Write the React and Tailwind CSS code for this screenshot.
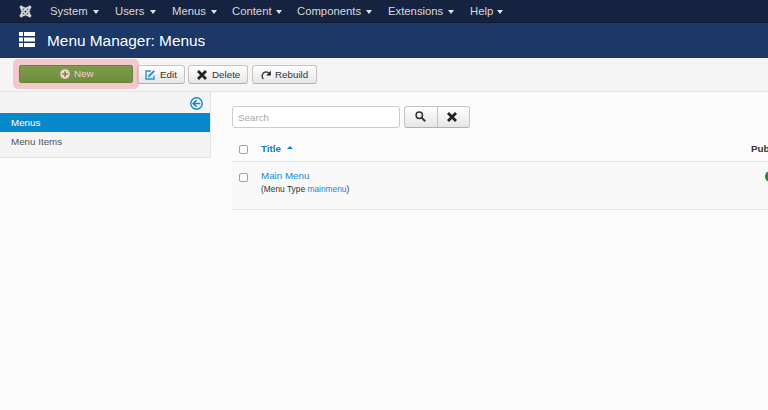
import React from 'react';
import { FaJoomla } from 'react-icons/fa';

const NAV = [
  ['System', 'w-[65px]', 'w-[39px]'],
  ['Users', 'w-[57px]', 'w-[31px]'],
  ['Menus', 'w-[60px]', 'w-[35px]'],
  ['Content', 'w-[65px]', 'w-[40px]'],
  ['Components', 'w-[91px]', 'w-[65px]'],
  ['Extensions', 'w-[82px]', 'w-[56px]'],
  ['Help', 'w-[40px]', 'w-[23px]'],
];

function CrossIcon() {
  return (
    <svg className="h-[10px] w-[10px] shrink-0" viewBox="0 0 10 10" fill="none" stroke="#222" strokeWidth="2.8">
      <path d="M1 1l8 8M9 1L1 9" />
    </svg>
  );
}

function Button({ className, children }) {
  return (
    <button className={`flex h-[19px] shrink-0 items-center rounded-[3px] border border-[#c4c4c4] border-b-[#b0b0b0] bg-linear-to-b from-white to-[#e6e6e6] text-[9.8px] text-[#333] ${className}`}>
      {children}
    </button>
  );
}

function Checkbox() {
  return <span className="block h-[9px] w-[9px] rounded-[2px] border border-[#a0a0a0] bg-white" />;
}

export default function App() {
  return (
    <div className="flex h-[410px] w-[768px] flex-col overflow-hidden bg-[#fcfcfc] font-['Liberation_Sans',Arial,sans-serif] text-[9.8px] leading-none text-[#333]">
      <nav className="flex h-[23px] shrink-0 items-center border-b border-[#0d1a30] bg-[#152341] pl-[19px] text-[11.3px] text-[#d9d9d9]">
        <div className="w-[31px]"><FaJoomla className="h-[13px] w-[13px] stroke-[#d9d9d9] [stroke-width:16px]" /></div>
        {NAV.map(([name, width, label]) => (
          <div key={name} className={`flex shrink-0 items-center pt-px ${width}`}>
            <span className={`mr-1 whitespace-nowrap ${label}`}>{name}</span>
            <span className="mt-px border-x-[3.5px] border-t-[4px] border-x-transparent border-t-[#e4e4e4]" />
          </div>
        ))}
      </nav>

      <header className="flex h-[35px] shrink-0 items-center bg-[#1b3866] pl-[19px] text-[15.4px] text-white">
        <svg className="mr-3 mb-[3px] h-[15px] w-4 shrink-0" viewBox="0 0 16 15" fill="#fff">
          <path d="M0 0h4v4H0zM5 0h11v4H5zM0 5.5h4v4H0zM5 5.5h11v4H5zM0 11h4v4H0zM5 11h11v4H5z" />
        </svg>
        <h1>Menu Manager: Menus</h1>
      </header>

      <div className="flex h-[34px] shrink-0 items-start border-b border-[#e6e3dd] bg-[#f5f5f5] pl-[13px] pt-[1px]">
        <div className="relative z-10 h-[30px] w-[126px] shrink-0 rounded-[5px] bg-[#f08490]/40 px-[6px] pt-[6px]">
          <button className="flex h-[18px] w-[114px] items-center rounded-[2px] border border-[#68833c] bg-linear-to-b from-[#7b9c4a] to-[#6f8d40] pl-[40px] text-[9.8px] text-[#f5cfcb]">
            <svg className="mr-[4px] h-[10px] w-[10px]" viewBox="0 0 10 10">
              <circle cx="5" cy="5" r="4.8" fill="#f6d1d0" />
              <path d="M5 2.2v5.6M2.2 5h5.6" stroke="#6f8d40" strokeWidth="1.6" />
            </svg>
            New
          </button>
        </div>
        <div className="-ml-[2px] mt-[6px] flex">
          <Button className="w-[48px] pl-[7px]">
            <svg className="mr-[5px] h-[10px] w-[10px] shrink-0" viewBox="0 0 10 10" fill="none" stroke="#2a94d2" strokeWidth="1.4">
              <path d="M6 1H1v8h8V5.5" />
              <path d="M3.3 6.8L9.2.9" strokeWidth="2" />
            </svg>
            Edit
          </Button>
          <Button className="ml-[3px] w-[60px] gap-[5px] pl-[8px]"><CrossIcon />Delete</Button>
          <Button className="ml-1 w-[65px] pl-[8px]">
            <svg className="mr-[4px] h-[10px] w-[10px] shrink-0" viewBox="0 0 10 10" fill="none" stroke="#444" strokeWidth="1.5">
              <path d="M2.4 9A4 4 0 0 1 1.4 4.8C2.4 1.8 6 1 8.2 3.4" />
              <path d="M9.8 .8v4.6H5.2z" fill="#222" stroke="none" />
            </svg>
            Rebuild
          </Button>
        </div>
      </div>

      <div className="flex min-h-0 flex-1">
        <aside className="flex h-[66px] w-[211px] shrink-0 flex-col rounded-br-[3px] border-b border-r border-[#e3e3e3] bg-[#f4f4f4]">
          <div className="flex h-[21px] justify-end pr-[7px] pt-[5px]">
            <svg className="h-[13px] w-[13px]" viewBox="0 0 12 12" fill="none" stroke="#1689cc" strokeWidth="1.3">
              <circle cx="6" cy="6" r="5.3" />
              <path d="M9.5 6H3.2M6 3L3 6l3 3" strokeWidth="1.6" />
            </svg>
          </div>
          <a className="flex h-[19px] items-center bg-[#0788cc] pl-[11px] text-white">Menus</a>
          <a className="flex h-[18px] items-center pl-[11px] pt-px text-[#555]">Menu Items</a>
        </aside>

        <main className="ml-[21px] flex w-[760px] shrink-0 flex-col pt-[14px]">
          <div className="flex h-[22px]">
            <input placeholder="Search" className="h-[22px] w-[168px] rounded-[3px] border border-[#ccc] bg-white px-[5px] text-[9.8px] placeholder:text-[#aaa]" />
            <div className="ml-[4px] flex h-[22px] w-[66px] rounded-[3px] border border-[#c4c4c4] border-b-[#b0b0b0] bg-linear-to-b from-white to-[#e6e6e6]">
              <button className="flex w-[33px] items-center justify-center border-r border-[#c4c4c4] pr-[2px] pb-px">
                <svg className="h-[11px] w-[11px]" viewBox="0 0 11 11" fill="none" stroke="#333" strokeWidth="1.5">
                  <circle cx="4.3" cy="4.3" r="3.2" />
                  <path d="M6.6 6.6l3.6 3.6" strokeWidth="2" />
                </svg>
              </button>
              <button className="flex flex-1 items-center justify-center pr-[3px]"><CrossIcon /></button>
            </div>
          </div>
          <div className="mt-[8px] flex h-[25px] items-center pl-[7px] font-bold">
            <span className="mt-px"><Checkbox /></span>
            <span className="ml-[13px] pt-px text-[#0f80c0]">Title</span>
            <span className="ml-[6px] mb-[2px] border-x-[3px] border-b-[3px] border-x-transparent border-b-[#0f80c0]" />
            <span className="ml-auto mr-[190px] w-[51px] pt-px">Published</span>
          </div>
          <div className="flex h-[49px] items-start border-y border-[#e6e6e6] bg-[#f9f9f9] pl-[7px] pt-[9px]">
            <span className="mt-[2px]"><Checkbox /></span>
            <div className="ml-[13px] w-[505px] shrink-0">
              <a className="block text-[#1689cc]">Main Menu</a>
              <p className="mt-[4px] text-[8.4px]">(Menu Type <a className="text-[#1689cc]">mainmenu</a>)</p>
            </div>
            <span className="-ml-px h-[11px] w-[11px] shrink-0 rounded-full bg-[#378137]" />
          </div>
        </main>
      </div>
    </div>
  );
}
